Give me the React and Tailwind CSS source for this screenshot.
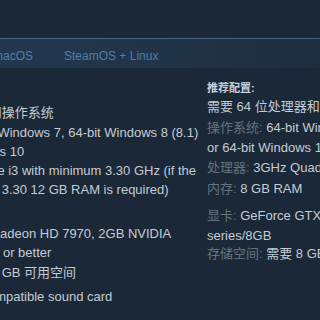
import React from "react";

const minReq = [
  { text: "需 64 位处理器和操作系统", cls: "" },
  {
    label: "操作系统:",
    text: "64-bit Windows 7, 64-bit Windows 8 (8.1)",
    more: "or 64-bit Windows 10",
    cls: "mt-px",
  },
  {
    label: "处理器:",
    text: "Intel Core i3 with minimum 3.30 GHz (if the",
    more: "CPU is less than 3.30 12 GB RAM is required)",
    cls: "",
  },
  { label: "内存:", text: "8 GB RAM", cls: "mt-[3px]" },
  {
    label: "显卡:",
    text: "AMD/ATI Radeon HD 7970, 2GB NVIDIA",
    more: "GeForce GT 740 or better",
    cls: "mt-[3px]",
  },
  { label: "存储空间:", text: "需要 8 GB 可用空间", cls: "mt-px" },
  { label: "声卡:", text: "DirectX compatible sound card", cls: "mt-[5px]" },
];

const recReq = [
  { text: "需要 64 位处理器和操作系统", cls: "" },
  {
    label: "操作系统:",
    text: "64-bit Windows 7, 64-bit Windows 8 (8.1)",
    more: "or 64-bit Windows 10",
    cls: "mt-px",
  },
  { label: "处理器:", text: "3GHz Quad Core or better", cls: "" },
  { label: "内存:", text: "8 GB RAM", cls: "mt-px" },
  {
    label: "显卡:",
    text: "GeForce GTX 970 or AMD Radeon R9 290X",
    more: "series/8GB",
    cls: "mt-[7px]",
  },
  { label: "存储空间:", text: "需要 8 GB 可用空间", cls: "-mt-[2px]" },
];

const ReqItem = ({ item, lh }) => (
  <li className={`${lh} whitespace-nowrap ${item.cls}`}>
    {item.label && <span className="text-[#66737f]">{item.label} </span>}
    {item.text}
    {item.more && (
      <>
        <br />
        {item.more}
      </>
    )}
  </li>
);

export default function App() {
  return (
    <div
      className="w-[320px] h-[320px] overflow-hidden bg-[#1b2838] text-[13px] text-[#c5ccd3]"
      style={{ fontFamily: '"Liberation Sans", Arial, "Noto Sans CJK SC", sans-serif' }}
    >
      <div className="h-[38px]" />

      {/* Platform tabs */}
      <div className="h-[30px] border-t border-[#4a6580] bg-gradient-to-r from-[#223850] to-[#1f2e3f] flex text-[12px] leading-4 text-[#4f7ea8] pt-[9px]">
        <div className="ml-[-22px] px-[15px]">macOS</div>
        <div className="ml-[1px] px-[15px]">SteamOS + Linux</div>
      </div>

      {/* Requirements */}
      <div className="flex ml-[-98px] gap-[10px]">
        <div className="w-[295px] shrink-0 pt-[35px]">
          <ul>
            {minReq.map((item, i) => (
              <ReqItem key={i} item={item} lh="leading-[19px]" />
            ))}
          </ul>
        </div>
        <div className="w-[320px] shrink-0 pt-[13px]">
          <div className="text-[11px] leading-[14px] mb-[2px] text-[#c6d4df] font-bold">
            推荐配置:
          </div>
          <ul>
            {recReq.map((item, i) => (
              <ReqItem key={i} item={item} lh="leading-5" />
            ))}
          </ul>
        </div>
      </div>
    </div>
  );
}
